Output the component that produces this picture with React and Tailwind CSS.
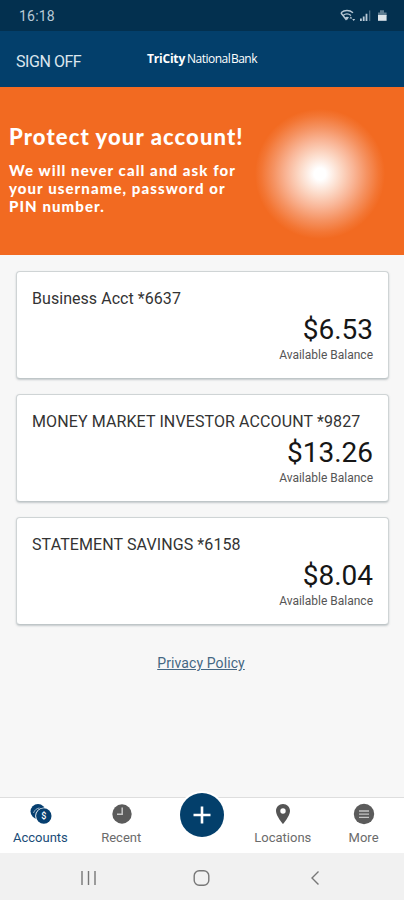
import { clsx } from "clsx";

const accounts = [
  { name: "Business Acct *6637", balance: "$6.53", tracking: "tracking-[0.05px]" },
  { name: "MONEY MARKET INVESTOR ACCOUNT *9827", balance: "$13.26", tracking: "tracking-[0.11px]" },
  { name: "STATEMENT SAVINGS *6158", balance: "$8.04", tracking: "tracking-[0.1px]" },
];

function StatusBar() {
  return (
    <div className="flex h-[31px] items-center justify-between bg-[#03304f] pl-[19px] pr-4 text-[#b9c9d6]">
      <span className="pt-px text-[14px] leading-5 tracking-[0.2px]">16:18</span>
      <svg width="50" height="16" viewBox="0 0 50 16" fill="none">
        <g stroke="currentColor" strokeWidth="1.4">
          <path d="M3 4.8C6.5 1.8 11.5 1.8 15 4.8" />
          <path d="M5 7.5c2.5-2 5.5-2 8 0" />
          <path d="M3 5l5.5 7" />
        </g>
        <path d="M7 9.3c1.3-.9 2.7-.9 4 0l-2 2.8z" fill="currentColor" />
        <path d="M11.5 10.5l1.4-2 1.4 2zM14.2 11l1.5 2 1.5-2z" fill="currentColor" />
        <path d="M22 10.5h1.8V13H22zM24.8 8.5h1.8V13h-1.8zM27.6 5.8h1.8V13h-1.8z" fill="currentColor" />
        <path d="M31 2.5h1.3V13H31z" fill="currentColor" opacity=".4" />
        <path d="M40 4.5h2V2.3h4v2.2h2.6V8H40z" fill="currentColor" opacity=".5" />
        <path d="M40 7h8.6v5.8H40z" fill="#dde5eb" />
      </svg>
    </div>
  );
}

function Header() {
  return (
    <header className="grid h-14 grid-cols-[147px_1fr] items-center bg-[#033f6b] text-white">
      <button type="button" className="pl-4 pt-1.5 text-left text-[16px] leading-6 tracking-[-0.45px] text-[#dce6ee]">
        SIGN OFF
      </button>
      <div className="whitespace-nowrap font-['Open_Sans',sans-serif] text-[12px] leading-4">
        <span className="font-bold tracking-[-0.2px]">TriCity</span>
        <span className="ml-[2px] tracking-[-0.5px] [word-spacing:-2px]">National Bank</span>
      </div>
    </header>
  );
}

function Banner() {
  return (
    <section className="flex h-[168px] items-start justify-between bg-[#f26a21] pl-[9px] pr-[19px] font-[Lato,sans-serif] font-black text-white">
      <div className="whitespace-nowrap pt-[36px]">
        <h1 className="text-[22px] leading-7 tracking-[1.1px]">Protect your account!</h1>
        <p className="mt-[10px] text-[15px] leading-[18px] tracking-[1.08px]">
          We will never call and ask for
          <br />
          your username, password or
          <br />
          PIN number.
        </p>
      </div>
      <div className="mt-[22px] h-[130px] w-[130px] shrink-0 rounded-full bg-[radial-gradient(circle_closest-side,#fff_0%,#fff_9%,#fcdccb_30%,#f9b596_52%,#f59261_72%,#f37634_90%,#f26a21_100%)]" />
    </section>
  );
}

function AccountCard({ name, balance, tracking }) {
  return (
    <div className="h-[108px] rounded-[4px] border border-[#cfd4d5] border-b-[#bfc6c8] bg-white px-[15px] pt-4 shadow-[0_1px_2px_rgba(100,115,120,0.35)]">
      <div className={clsx("whitespace-nowrap text-[16px] leading-[22px] text-[#333]", tracking)}>
        {name}
      </div>
      <div className="mt-1 text-right text-[28px] leading-8 text-[#161616]">{balance}</div>
      <div className="mt-px text-right text-[12px] leading-4 text-[#555]">Available Balance</div>
    </div>
  );
}

function NavItem({ label, active, children }) {
  return (
    <button
      type="button"
      className={clsx("flex flex-col items-center pt-[5px]", active ? "text-[#184b77]" : "text-[#6b6b6b]")}
    >
      {children}
      <span className="mt-[5px] text-[13px] leading-4">{label}</span>
    </button>
  );
}

function BottomNav() {
  return (
    <nav className="grid h-14 grid-cols-5 border-t border-[#dedede] bg-white">
      <NavItem label="Accounts" active>
        <svg width="24" height="22" viewBox="0 0 24 22">
          <circle cx="10" cy="8.5" r="7.5" fill="#063f70" />
          <path d="M5.5 10c1-3 3.2-4.7 6-5" stroke="#fff" strokeWidth="1" fill="none" opacity=".6" />
          <circle cx="15.8" cy="13" r="8.6" fill="#fff" />
          <circle cx="15.8" cy="13" r="7.7" fill="#063f70" />
          <text x="15.8" y="16.3" textAnchor="middle" fontSize="9" fontWeight="500" fill="#fff">$</text>
        </svg>
      </NavItem>
      <NavItem label="Recent">
        <svg width="22" height="22" viewBox="0 0 22 22">
          <circle cx="12" cy="11" r="9.7" fill="#5b5b5b" />
          <path d="M12.2 4.5v6.8H7" fill="none" stroke="#c9c9c9" strokeWidth="1.5" />
        </svg>
      </NavItem>
      <div className="flex justify-center">
        <button
          type="button"
          className="-mt-[5px] flex h-[44px] w-[44px] items-center justify-center rounded-full bg-[#033f6b] shadow-[0_0_0_2px_white]"
        >
          <svg width="20" height="20" viewBox="0 0 20 20">
            <path d="M10 1.5v17M1.5 10h17" stroke="#fff" strokeWidth="2.6" />
          </svg>
        </button>
      </div>
      <NavItem label="Locations">
        <svg width="22" height="22" viewBox="0 0 22 22">
          <path
            fillRule="evenodd"
            d="M11 1C7 1 4 4 4 8c0 5 7 13 7 13s7-8 7-13c0-4-3-7-7-7zm0 4.3a2.7 2.7 0 1 1 0 5.4 2.7 2.7 0 0 1 0-5.4z"
            fill="#555"
          />
        </svg>
      </NavItem>
      <NavItem label="More">
        <svg width="22" height="22" viewBox="0 0 22 22">
          <circle cx="11" cy="11" r="10.2" fill="#5b5b5b" />
          <path d="M6 8h10M6 11.2h10M6 14.4h10" stroke="#c4c4c4" strokeWidth="1.3" />
        </svg>
      </NavItem>
    </nav>
  );
}

function SystemNav() {
  return (
    <div className="flex h-[47px] items-center justify-center bg-[#f1f1f1] pt-[3px]">
      <svg width="250" height="20" viewBox="0 0 250 20" fill="none" stroke="#777" strokeWidth="1.4">
        <path d="M5 3v14M11.5 3v14M18 3v14" />
        <rect x="117.2" y="2.7" width="14.6" height="14.6" rx="5" />
        <path d="M241.5 3.5L235 10l6.5 6.5" />
      </svg>
    </div>
  );
}

export default function App() {
  return (
    <div className="flex h-[900px] w-full flex-col overflow-hidden bg-[#f7f7f7] font-[Roboto,sans-serif]">
      <StatusBar />
      <Header />
      <Banner />
      <main className="flex flex-1 flex-col gap-[15px] pl-4 pr-[15px] pt-4">
        {accounts.map((account) => (
          <AccountCard key={account.name} {...account} />
        ))}
        <a href="#privacy" className="mr-[3px] mt-[13px] self-center text-[14px] leading-5 tracking-[0.1px] text-[#456783] underline">
          Privacy Policy
        </a>
      </main>
      <BottomNav />
      <SystemNav />
    </div>
  );
}
